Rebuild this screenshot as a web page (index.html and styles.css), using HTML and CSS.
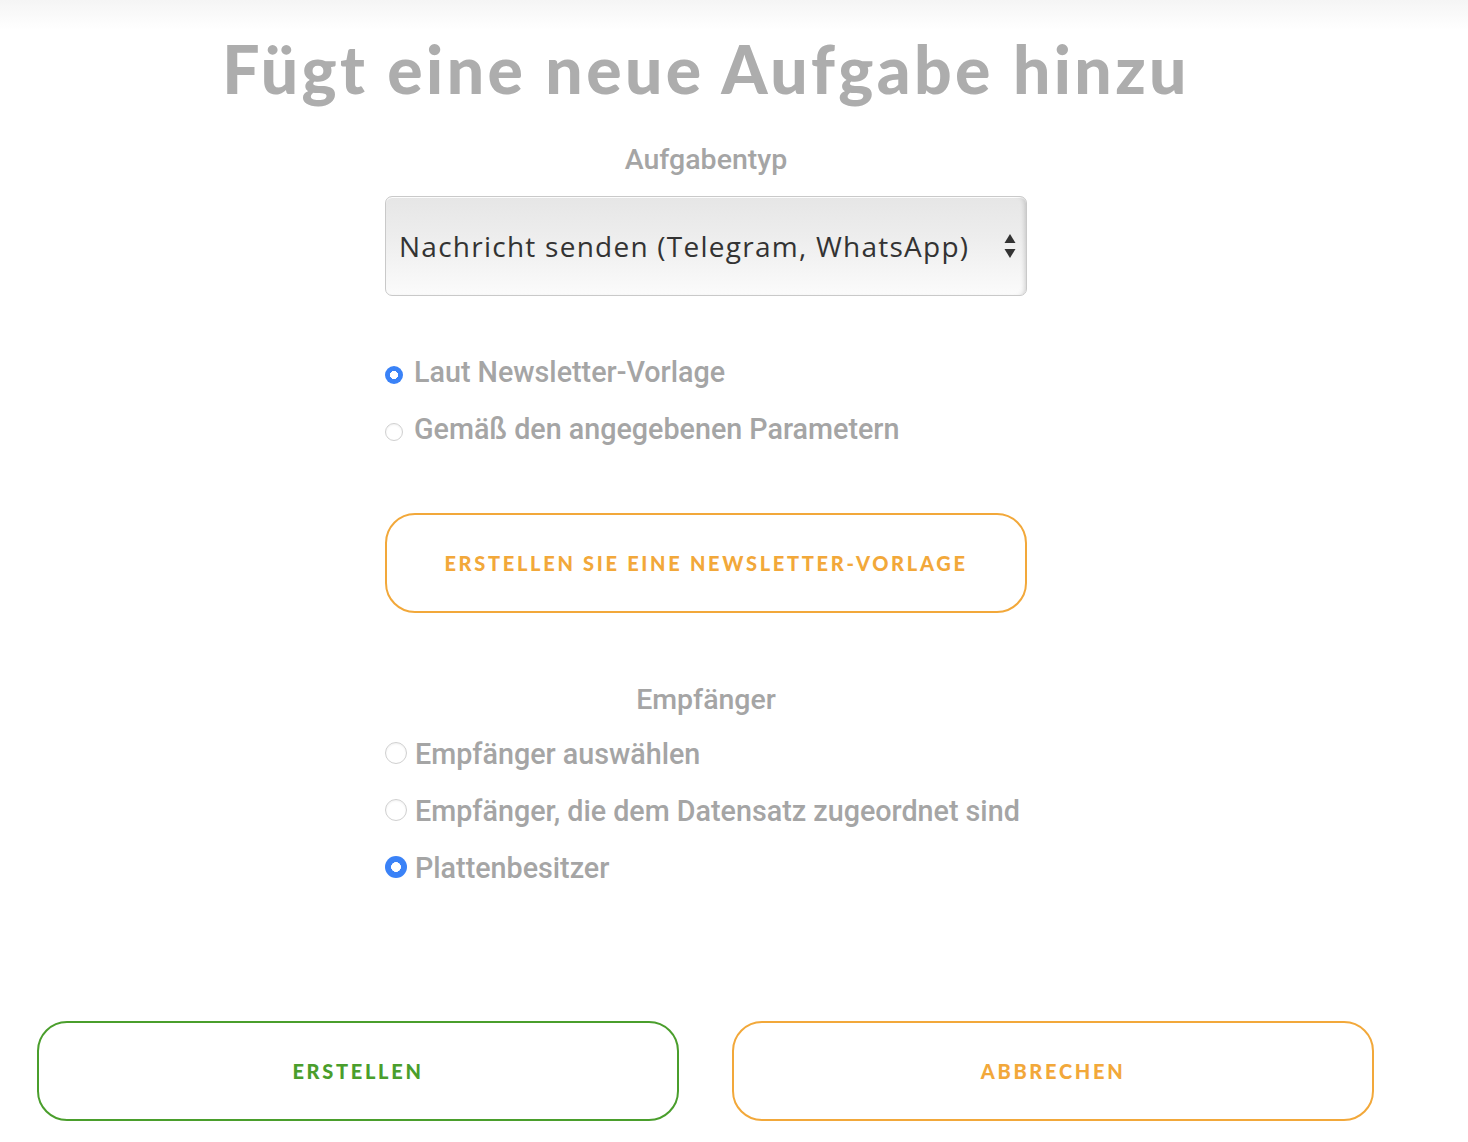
FILE: index.html
```html
<!DOCTYPE html>
<html lang="de">
<head>
<meta charset="utf-8">
<title>Fügt eine neue Aufgabe hinzu</title>
<link rel="stylesheet" href="styles.css">
</head>
<body>
<div class="topbar"></div>
<main class="page">
  <h1 class="title">Fügt eine neue Aufgabe hinzu</h1>
  <section class="form">
    <div class="label label-type">Aufgabentyp</div>
    <div class="select-wrap">
      <select class="select">
        <option>Nachricht senden (Telegram, WhatsApp)</option>
      </select>
      <svg class="select-arrows" width="12" height="26" viewBox="0 0 12 26">
        <path d="M6 1 L11.5 10 L0.5 10 Z" fill="#333"/>
        <path d="M6 25 L11.5 16 L0.5 16 Z" fill="#333"/>
      </svg>
    </div>

    <div class="radios radios-small">
      <label class="radio-row"><input type="radio" name="src" class="radio" checked><span>Laut Newsletter-Vorlage</span></label>
      <label class="radio-row"><input type="radio" name="src" class="radio"><span>Gemäß den angegebenen Parametern</span></label>
    </div>

    <button class="btn btn-orange btn-template">Erstellen Sie eine Newsletter-Vorlage</button>

    <div class="label label-recv">Empfänger</div>
    <div class="radios radios-large">
      <label class="radio-row"><input type="radio" name="rcv" class="radio"><span>Empfänger auswählen</span></label>
      <label class="radio-row"><input type="radio" name="rcv" class="radio"><span>Empfänger, die dem Datensatz zugeordnet sind</span></label>
      <label class="radio-row"><input type="radio" name="rcv" class="radio" checked><span>Plattenbesitzer</span></label>
    </div>
  </section>

  <div class="actions">
    <button class="btn btn-green">Erstellen</button>
    <button class="btn btn-orange">Abbrechen</button>
  </div>
</main>
</body>
</html>
```

FILE: styles.css
```css
* { box-sizing: border-box; }
html, body { margin: 0; padding: 0; background: #fff; }
body { font-family: "Roboto", "Liberation Sans", sans-serif; }

.topbar {
  height: 30px;
  background: linear-gradient(to bottom, #f5f5f5, #ffffff);
}

.page {
  width: 1412px;
  display: flex;
  flex-direction: column;
  align-items: center;
}

.title {
  margin: 0;
  font-family: "Lato", sans-serif;
  font-weight: 900;
  font-size: 66px;
  line-height: 77px;
  color: #adadad;
  letter-spacing: 3.4px;
  text-align: center;
  white-space: nowrap;
}

.form {
  width: 642px;
  display: flex;
  flex-direction: column;
}

.label {
  text-align: center;
  font-size: 28.5px;
  font-weight: 500;
  line-height: 34px;
  color: #a5a5a5;
}
.label-type { margin-top: 36px; }
.label-recv { margin-top: 70px; }

.select-wrap {
  position: relative;
  margin-top: 19px;
  height: 100px;
}
.select {
  -webkit-appearance: none;
  appearance: none;
  width: 100%;
  height: 100%;
  border: 1.5px solid #c9c9c9;
  border-radius: 7px;
  padding: 0 50px 0 13px;
  font-family: "Open Sans", sans-serif;
  font-size: 28px;
  letter-spacing: 1.25px;
  color: #333;
  background: linear-gradient(to bottom, #e6e6e6 0%, #eeeeee 45%, #fbfbfb 100%);
  box-shadow: inset -4px 0 5px -3px rgba(0,0,0,0.18), inset 0 1px 0 #fff;
  outline: none;
}
.select-arrows {
  position: absolute;
  right: 11px;
  top: 37px;
  pointer-events: none;
}

.radios {
  display: flex;
  flex-direction: column;
  gap: 17px;
}
.radios-small { margin-top: 56px; }
.radios-large { margin-top: 17px; }

.radio-row {
  display: flex;
  align-items: center;
  height: 40px;
  font-size: 28.7px;
  font-weight: 500;
  color: #a5a5a5;
  white-space: nowrap;
}
.radio {
  -webkit-appearance: none;
  appearance: none;
  margin: 0;
  flex: none;
  border-radius: 50%;
  border: 1px solid #d0d0d0;
  background: #fff;
  box-shadow: inset 0 1px 2px rgba(0,0,0,0.06);
}
.radio:checked {
  border: none;
  background: radial-gradient(circle, #ffffff 0 30%, #3a82f7 33% 100%);
  box-shadow: none;
}
.radios-small .radio { width: 18px; height: 18px; margin-top: 6px; margin-right: 11px; }
.radios-large .radio { width: 22px; height: 22px; margin-top: -3px; margin-right: 8px; }

.btn {
  display: flex;
  align-items: center;
  justify-content: center;
  height: 100px;
  background: #fff;
  border: 2px solid;
  border-radius: 30px;
  font-family: "Lato", sans-serif;
  font-weight: 900;
  font-size: 20px;
  letter-spacing: 2.7px;
  text-transform: uppercase;
  cursor: pointer;
}
.btn-orange { color: #f2a83a; border-color: #f2a83a; }
.btn-green { color: #4a9e2c; border-color: #4a9e2c; }
.btn-template { margin-top: 64px; width: 642px; }

.actions {
  width: 1412px;
  padding: 0 37px;
  margin-top: 133px;
  display: grid;
  grid-template-columns: 642px 642px;
  column-gap: 53px;
}
```
